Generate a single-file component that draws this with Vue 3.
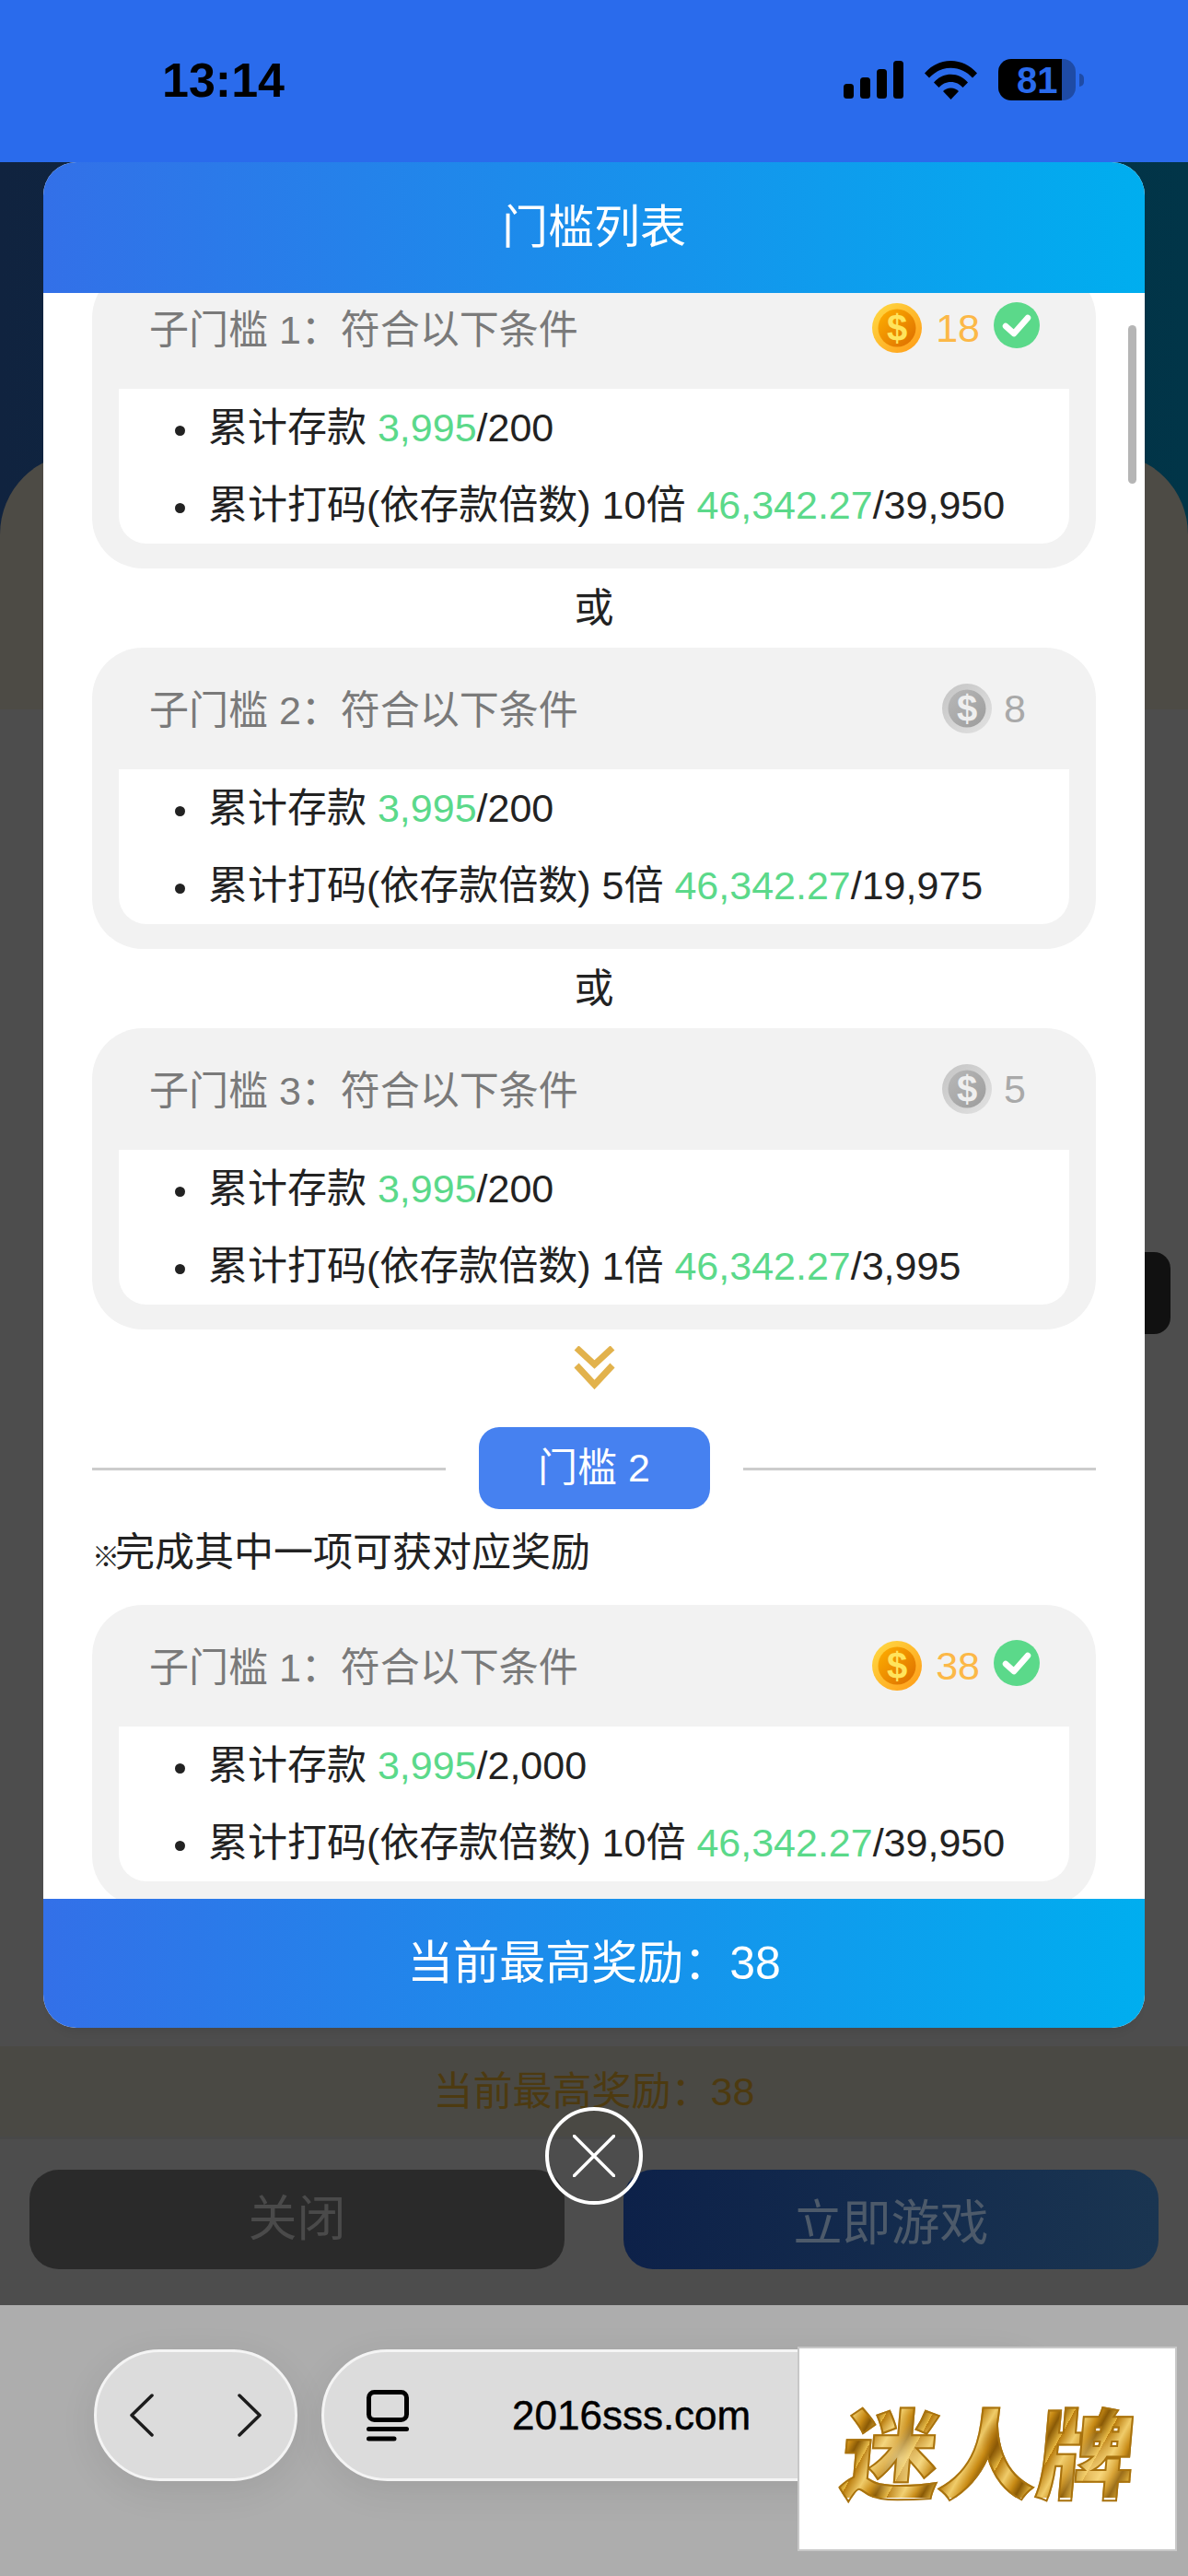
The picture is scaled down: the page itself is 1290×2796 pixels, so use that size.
<script setup>
const groups = [
  {
    id: 1,
    showTitle: false,
    cards: [
      { name: '子门槛 1：符合以下条件', reward: 18, done: true, deposit: '/200', times: '10倍', bet: '/39,950' },
      { name: '子门槛 2：符合以下条件', reward: 8, done: false, deposit: '/200', times: '5倍', bet: '/19,975' },
      { name: '子门槛 3：符合以下条件', reward: 5, done: false, deposit: '/200', times: '1倍', bet: '/3,995' },
    ],
  },
  {
    id: 2,
    showTitle: true,
    cards: [{ name: '子门槛 1：符合以下条件', reward: 38, done: true, deposit: '/2,000', times: '10倍', bet: '/39,950' }],
  },
]
</script>

<template>
  <div class="phone">
    <svg class="defs" width="0" height="0" aria-hidden="true">
      <defs>
        <linearGradient id="rim-gold" x1="0" y1="0" x2="1" y2="1">
          <stop offset="0" stop-color="#ffdc45" />
          <stop offset="1" stop-color="#ff9a16" />
        </linearGradient>
        <linearGradient id="face-gold" x1="0" y1="0" x2="1" y2="1">
          <stop offset="0" stop-color="#ffb000" />
          <stop offset="1" stop-color="#dc6c00" />
        </linearGradient>
        <linearGradient id="rim-grey" x1="0" y1="0" x2="1" y2="1">
          <stop offset="0" stop-color="#c4c4c4" />
          <stop offset="1" stop-color="#e2e2e2" />
        </linearGradient>
        <linearGradient id="face-grey" x1="0" y1="0" x2="1" y2="1">
          <stop offset="0" stop-color="#b8b8b8" />
          <stop offset="1" stop-color="#9c9c9c" />
        </linearGradient>
      </defs>
    </svg>

    <header class="status">
      <span class="clock">13:14</span>
      <div class="status-icons">
        <svg width="65" height="41" viewBox="0 0 65 41" fill="#000">
          <rect x="0" y="25" width="11" height="16" rx="3.5" />
          <rect x="18" y="18" width="11" height="23" rx="3.5" />
          <rect x="36" y="9" width="11" height="32" rx="3.5" />
          <rect x="54" y="0" width="11" height="41" rx="3.5" />
        </svg>
        <svg width="57" height="42" viewBox="0 0 57 42" fill="#000">
          <path d="M0 13.5C7.5 5 17.5 0 28.500 0S49.500 5 57 13.500L52 18.500C46 12 38 7.800 28.500 7.800S11 12 5 18.500Z" />
          <path d="M10 23.500C15 18 21 14.800 28.500 14.800S42 18 47 23.500L41.500 29C38 25.300 34 23 28.500 23S19 25.300 15.500 29Z" />
          <path d="M20 33C22.500 30.700 25 29.500 28.500 29.500S34.500 30.700 37 33L28.500 42Z" />
        </svg>
        <div class="battery">
          <div class="battery-body">
            <span class="battery-level">81</span>
          </div>
          <span class="battery-nub"></span>
        </div>
      </div>
    </header>

    <main class="stage">
      <div class="hero"></div>
      <div class="sheet"></div>
      <div class="spacer"></div>
      <div class="best-band">当前最高奖励：38</div>
      <div class="actions">
        <button class="btn btn-close">关闭</button>
        <button class="btn btn-play">立即游戏</button>
      </div>

      <div class="side-tab"></div>

      <section class="modal">
        <div class="modal-head">门槛列表</div>
        <div class="modal-body">
          <div class="scroll">
            <div v-for="group in groups" :key="group.id" class="group">
              <template v-if="group.showTitle">
                <div class="divider">
                  <span class="divider-line"></span>
                  <span class="divider-pill">门槛 {{ group.id }}</span>
                  <span class="divider-line"></span>
                </div>
                <p class="note"><span class="note-mark">※</span>完成其中一项可获对应奖励</p>
              </template>

              <template v-for="(card, i) in group.cards" :key="card.name">
                <div v-if="i > 0" class="or">或</div>
                <article class="card">
                  <div class="card-head">
                    <span class="card-name">{{ card.name }}</span>
                    <div class="reward" :class="{ 'reward-done': card.done }">
                      <svg class="coin" width="54" height="54" viewBox="0 0 54 54">
                        <circle cx="27" cy="27" r="27" :fill="card.done ? 'url(#rim-gold)' : 'url(#rim-grey)'" />
                        <circle cx="27" cy="27" r="20.500" :fill="card.done ? 'url(#face-gold)' : 'url(#face-grey)'" />
                        <text
                          x="27"
                          y="41"
                          text-anchor="middle"
                          font-size="40"
                          font-weight="700"
                          font-family="Liberation Sans, sans-serif"
                          :fill="card.done ? '#ffe45c' : '#efefef'"
                        >$</text>
                      </svg>
                      <span class="reward-num">{{ card.reward }}</span>
                      <svg v-if="card.done" class="check" width="50" height="50" viewBox="0 0 50 50">
                        <circle cx="25" cy="25" r="25" fill="#5bd98a" />
                        <path d="M13 26L22 34L37 17" fill="none" stroke="#fff" stroke-width="6.500" stroke-linecap="round" stroke-linejoin="round" />
                      </svg>
                    </div>
                  </div>
                  <ul class="rules">
                    <li>累计存款 <em>3,995</em>{{ card.deposit }}</li>
                    <li>累计打码(依存款倍数) {{ card.times }} <em>46,342.27</em>{{ card.bet }}</li>
                  </ul>
                </article>
              </template>

              <svg v-if="group.id === 1" class="chevrons" width="47" height="47" viewBox="0 0 47 47" fill="none" stroke="#e2b24c" stroke-width="7">
                <path d="M4 2L23.500 20L43 2" />
                <path d="M4 21L23.500 42L43 21" />
              </svg>
            </div>
          </div>
          <span class="scrollbar"></span>
        </div>
        <div class="modal-foot">当前最高奖励：38</div>
      </section>

      <button class="modal-x" aria-label="关闭">
        <svg width="46" height="46" viewBox="0 0 46 46" stroke="#fff" stroke-width="3.500" stroke-linecap="round">
          <path d="M1.500 1.500L44.500 44.500M44.500 1.500L1.500 44.500" />
        </svg>
      </button>
    </main>

    <footer class="browser">
      <div class="nav-pill">
        <svg width="26" height="47" viewBox="0 0 26 47" fill="none" stroke="#1c1c1c" stroke-width="3.500" stroke-linecap="round" stroke-linejoin="round">
          <path d="M24 2L2 23.500L24 45" />
        </svg>
        <svg width="26" height="47" viewBox="0 0 26 47" fill="none" stroke="#1c1c1c" stroke-width="3.500" stroke-linecap="round" stroke-linejoin="round">
          <path d="M2 2L24 23.500L2 45" />
        </svg>
      </div>
      <div class="url-pill">
        <svg width="46" height="56" viewBox="0 0 46 56" fill="none" stroke="#000" stroke-width="5" stroke-linecap="round">
          <rect x="2.500" y="2.500" width="41" height="30" rx="6" />
          <path d="M2.500 42.500H43.500M2.500 53H30" />
        </svg>
        <span class="url">2016sss.com</span>
      </div>
      <div class="logo">
        <span class="logo-text">迷人牌</span>
      </div>
    </footer>
  </div>
</template>

<style>
html,
body {
  margin: 0;
  background: #4d4d4d;
}
</style>

<style scoped>
.phone {
  width: 1290px;
  height: 2796px;
  display: flex;
  flex-direction: column;
  overflow: hidden;
  font-family: "Liberation Sans", "Noto Sans CJK SC", sans-serif;
}

.defs {
  position: absolute;
}

.status {
  height: 176px;
  flex: none;
  box-sizing: border-box;
  padding: 64px 113px 0 176px;
  display: flex;
  justify-content: space-between;
  align-items: flex-start;
  background: #2a6bec;
}

.clock {
  font-size: 52px;
  line-height: 46px;
  font-weight: 700;
  color: #000;
}

.status-icons {
  display: flex;
  align-items: center;
  gap: 23px;
}

.battery {
  display: flex;
  align-items: center;
  gap: 4px;
}

.battery-body {
  width: 84px;
  height: 45px;
  border-radius: 14px;
  overflow: hidden;
  background: linear-gradient(90deg, #000 82%, #1e4ba6 82%);
  display: flex;
  align-items: center;
  padding-left: 20px;
  box-sizing: border-box;
}

.battery-level {
  font-size: 40px;
  line-height: 1;
  font-weight: 700;
  color: #2a6bec;
}

.battery-nub {
  width: 5px;
  height: 14px;
  border-radius: 0 6px 6px 0;
  background: #1e4ba6;
}

.stage {
  position: relative;
  flex: 1;
  display: flex;
  flex-direction: column;
  background: #4d4d4d;
}

.hero {
  height: 404px;
  background: linear-gradient(90deg, #10233f, #013548);
}

.sheet {
  height: 278px;
  margin-top: -88px;
  border-radius: 88px 88px 0 0;
  background: #4d4b45;
}

.spacer {
  flex: 1;
}

.best-band {
  height: 98px;
  line-height: 98px;
  text-align: center;
  font-size: 43px;
  color: #4d3a10;
  background: #4a4944;
  border-bottom: 3px solid #484848;
}

.actions {
  height: 180px;
  box-sizing: border-box;
  padding: 33px 32px 0;
  display: flex;
  justify-content: space-between;
}

.btn {
  width: 581px;
  height: 108px;
  border: none;
  border-radius: 32px;
  font-family: inherit;
  font-size: 53px;
}

.btn-close {
  padding-bottom: 12px;
  background: #2a2a2a;
  color: #4a4a4a;
}

.btn-play {
  background: linear-gradient(90deg, #0d2149, #1a3551);
  color: #4d5a6a;
}

.side-tab {
  position: absolute;
  left: 1200px;
  top: 1183px;
  width: 71px;
  height: 89px;
  border-radius: 18px;
  background: #111;
}

.modal {
  position: absolute;
  left: 47px;
  top: 0;
  width: 1196px;
  height: 2025px;
  display: flex;
  flex-direction: column;
  border-radius: 36px;
  overflow: hidden;
  background: #fff;
  box-shadow: 0 12px 8px -6px rgba(0, 0, 0, 0.05);
}

.modal-head {
  flex: none;
  height: 142px;
  line-height: 142px;
  text-align: center;
  font-size: 50px;
  color: #fff;
  background: linear-gradient(90deg, #3370e8, #00aeef);
}

.modal-body {
  position: relative;
  flex: 1;
  overflow: hidden;
}

.scroll {
  margin-top: -28px;
  padding: 0 53px;
}

.scrollbar {
  position: absolute;
  left: 1178px;
  top: 35px;
  width: 9px;
  height: 172px;
  border-radius: 5px;
  background: #b5b5b5;
}

.modal-foot {
  flex: none;
  height: 140px;
  line-height: 140px;
  text-align: center;
  font-size: 50px;
  color: #fff;
  background: linear-gradient(90deg, #3370e8, #00aeef);
}

.or {
  height: 86px;
  line-height: 86px;
  text-align: center;
  font-size: 43px;
  color: #222;
}

.card {
  height: 327px;
  box-sizing: border-box;
  padding: 0 29px;
  border-radius: 55px;
  background: #f2f2f2;
}

.card-head {
  height: 132px;
  padding-left: 33px;
  display: flex;
  align-items: center;
  justify-content: space-between;
}

.card-name {
  margin-bottom: 5px;
  font-size: 43px;
  color: #7a7a7a;
}

.reward {
  display: flex;
  align-items: center;
  gap: 13px;
  padding-right: 47px;
  font-size: 43px;
  color: #a9a9a9;
}

.reward-done {
  gap: 15px;
  padding-right: 32px;
  color: #fcb847;
}

.reward-num {
  line-height: 54px;
}

.coin,
.check {
  flex: none;
}

.check {
  margin-bottom: 6px;
}

.rules {
  height: 168px;
  margin: 0;
  padding: 0 0 0 97px;
  box-sizing: border-box;
  list-style: none;
  border-radius: 0 0 30px 30px;
  background: #fff;
  font-size: 43px;
  line-height: 84px;
  color: #222;
}

.rules li::before {
  content: "";
  display: inline-block;
  width: 11px;
  height: 11px;
  margin: 0 25px 0 -36px;
  border-radius: 50%;
  background: #222;
  vertical-align: middle;
}

.rules em {
  font-style: normal;
  color: #5bd98a;
}

.chevrons {
  display: block;
  margin: 18px auto 41px;
}

.divider {
  display: flex;
  align-items: center;
  gap: 36px;
}

.divider-line {
  flex: 1;
  height: 3px;
  margin-top: 2px;
  background: #ccc;
}

.divider-pill {
  width: 251px;
  height: 89px;
  line-height: 89px;
  text-align: center;
  border-radius: 22px;
  font-size: 43px;
  color: #fff;
  background: #4681f0;
}

.note {
  height: 70px;
  margin: 12px 0 22px;
  line-height: 70px;
  font-size: 43px;
  color: #222;
  white-space: nowrap;
}

.note-mark {
  display: inline-block;
  width: 25px;
  font-size: 30px;
  line-height: 30px;
  font-weight: 700;
  letter-spacing: -6px;
}

.modal-x {
  position: absolute;
  left: 592px;
  top: 2111px;
  width: 106px;
  height: 106px;
  box-sizing: border-box;
  padding: 0;
  display: flex;
  align-items: center;
  justify-content: center;
  border: 4px solid #fff;
  border-radius: 50%;
  background: transparent;
}

.browser {
  position: relative;
  flex: none;
  height: 294px;
  box-sizing: border-box;
  padding: 48px 0 0 102px;
  display: flex;
  align-items: flex-start;
  gap: 26px;
  background: #adadad;
}

.nav-pill {
  width: 221px;
  height: 143px;
  box-sizing: border-box;
  padding: 0 36px;
  display: flex;
  align-items: center;
  justify-content: space-between;
  border: 3px solid #f4f4f4;
  border-radius: 72px;
  background: #dcdcdc;
  box-shadow: 0 10px 40px rgba(0, 0, 0, 0.08);
}

.url-pill {
  width: 800px;
  height: 143px;
  box-sizing: border-box;
  padding-left: 46px;
  display: flex;
  align-items: center;
  gap: 112px;
  border: 3px solid #f4f4f4;
  border-radius: 72px;
  background: #dcdcdc;
  box-shadow: 0 10px 40px rgba(0, 0, 0, 0.08);
}

.url {
  font-size: 44px;
  color: #000;
  -webkit-text-stroke: 0.5px #000;
}

.logo {
  position: absolute;
  left: 866px;
  top: 45px;
  width: 412px;
  height: 222px;
  box-sizing: border-box;
  padding-left: 4px;
  display: flex;
  align-items: center;
  justify-content: center;
  border: 2px solid #c8c8c8;
  background: #fff;
}

.logo-text {
  font-family: "Noto Sans CJK SC", sans-serif;
  font-size: 106px;
  line-height: 1;
  font-weight: 900;
  transform: skewX(-5deg);
  -webkit-text-stroke: 2px #a8720e;
  background:
    radial-gradient(circle at 20% 60%, rgba(255, 236, 170, 0.7), transparent 18%),
    radial-gradient(circle at 55% 40%, rgba(140, 85, 5, 0.7), transparent 14%),
    radial-gradient(circle at 85% 70%, rgba(255, 225, 140, 0.7), transparent 16%),
    repeating-linear-gradient(115deg, #b87a0c 0, #f0cc6a 14px, #c88a14 26px, #8a5a06 34px, #e8b840 46px);
  -webkit-background-clip: text;
  background-clip: text;
  color: transparent;
}
</style>
